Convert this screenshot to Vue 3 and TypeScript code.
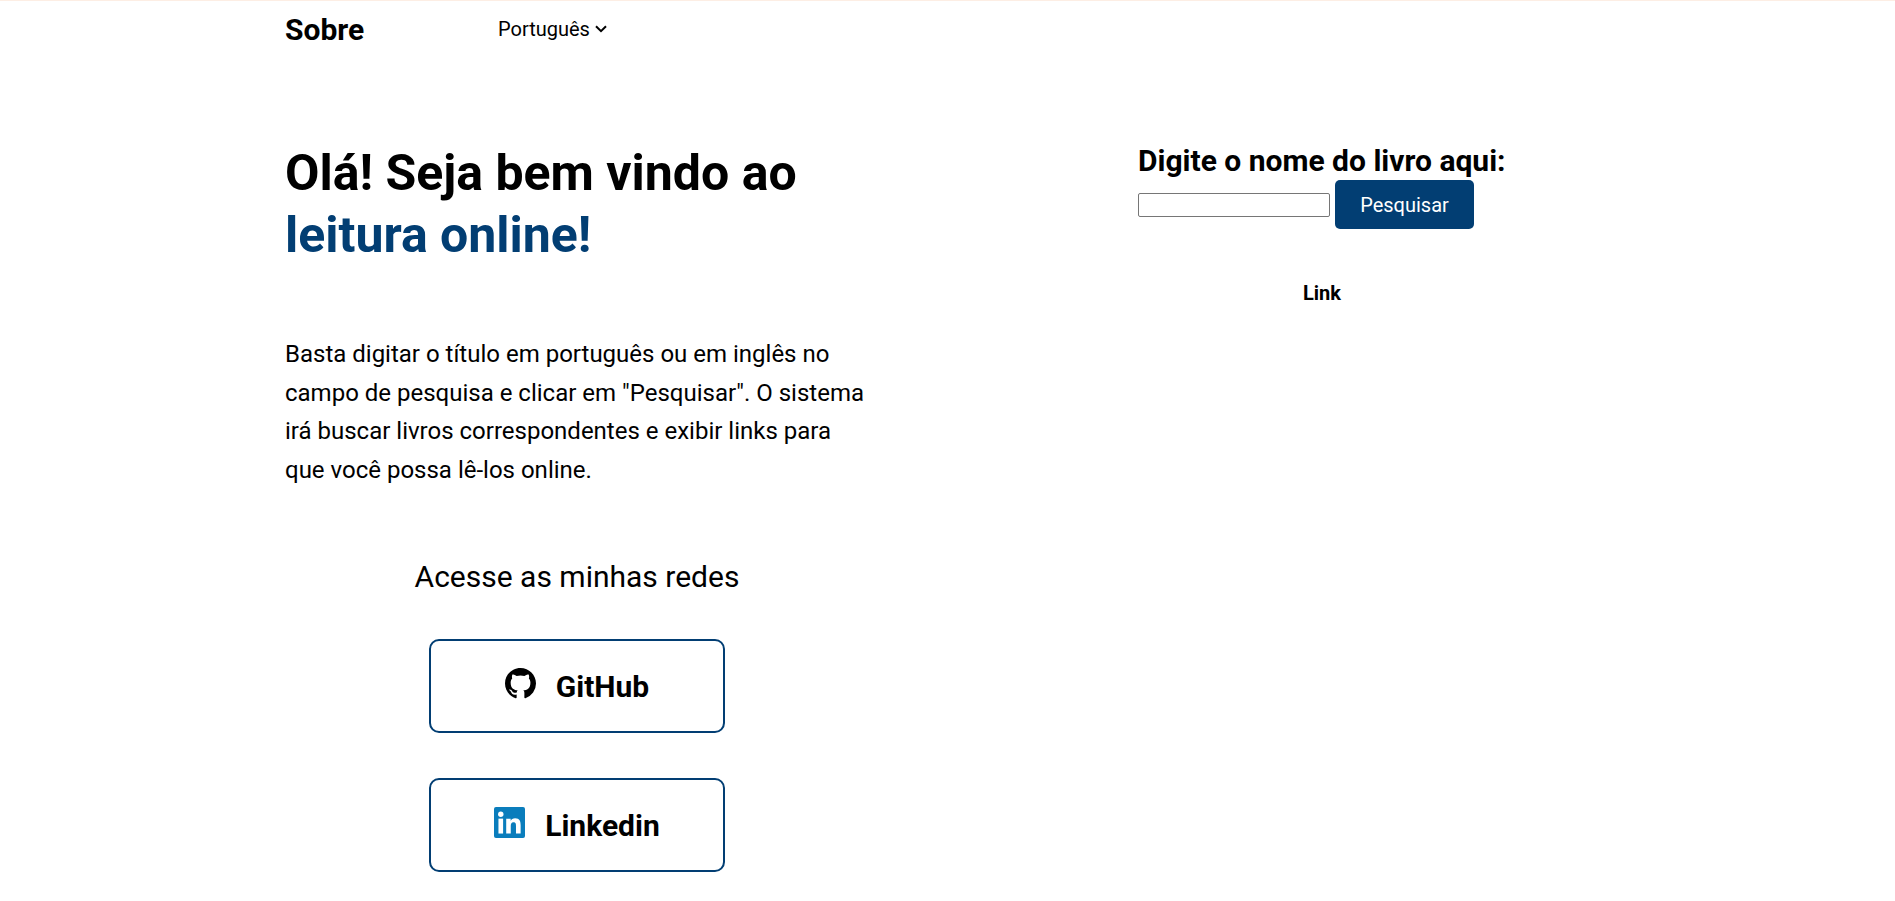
<script setup lang="ts">
const intro = 'Basta digitar o título em português ou em inglês no campo de pesquisa e clicar em "Pesquisar". O sistema irá buscar livros correspondentes e exibir links para que você possa lê-los online.'
</script>

<template>
  <div class="page">
    <header class="nav">
      <a class="about">Sobre</a>
      <div class="lang">
        <span>Português</span>
        <svg class="chev" viewBox="0 0 12 8" width="12" height="8"><path d="M1 1.2 6 6.2l5-5" fill="none" stroke="#000" stroke-width="2"/></svg>
      </div>
    </header>
    <main class="main">
      <section class="left">
        <h1>Olá! Seja bem vindo ao <span class="blue">leitura online!</span></h1>
        <p class="intro">{{ intro }}</p>
        <div class="social">
          <h3>Acesse as minhas redes</h3>
          <a class="card first">
            <svg class="icon" viewBox="0 0 16 16"><path fill="#000" d="M8 0C3.58 0 0 3.58 0 8c0 3.54 2.29 6.53 5.47 7.59.4.07.55-.17.55-.38 0-.19-.01-.82-.01-1.49-2.01.37-2.53-.49-2.69-.94-.09-.23-.48-.94-.82-1.13-.28-.15-.68-.52-.01-.53.63-.01 1.08.58 1.23.82.72 1.21 1.87.87 2.33.66.07-.52.28-.87.51-1.07-1.78-.2-3.64-.89-3.64-3.95 0-.87.31-1.59.82-2.15-.08-.2-.36-1.02.08-2.12 0 0 .67-.21 2.2.82.64-.18 1.32-.27 2-.27s1.36.09 2 .27c1.53-1.04 2.2-.82 2.2-.82.44 1.1.16 1.92.08 2.12.51.56.82 1.27.82 2.15 0 3.07-1.87 3.75-3.65 3.95.29.25.54.73.54 1.48 0 1.07-.01 1.93-.01 2.2 0 .21.15.46.55.38A8.01 8.01 0 0 0 16 8c0-4.42-3.58-8-8-8z"/></svg>
            <span>GitHub</span>
          </a>
          <a class="card">
            <svg class="icon" viewBox="0 0 32 32"><rect width="32" height="32" rx="2" fill="#0a7dbc"/><rect x="4.6" y="12" width="4.8" height="15.4" fill="#fff"/><circle cx="7" cy="7.4" r="2.8" fill="#fff"/><path fill="#fff" d="M12.6 12h4.6v2.1h.1c.6-1.2 2.2-2.5 4.5-2.5 4.8 0 5.7 3.2 5.7 7.3v8.5h-4.8v-7.5c0-1.8 0-4.1-2.5-4.1s-2.9 1.9-2.9 4v7.6h-4.7z"/></svg>
            <span>Linkedin</span>
          </a>
        </div>
      </section>
      <section class="right">
        <h2>Digite o nome do livro aqui:</h2>
        <form class="search" @submit.prevent>
          <input type="text" class="field" />
          <button class="btn" type="submit">Pesquisar</button>
        </form>
        <div class="result">Link</div>
      </section>
    </main>
  </div>
</template>

<style>
html, body { margin: 0; background: #fff; }
</style>

<style scoped>
.page {
  font-family: Roboto, "Liberation Sans", sans-serif;
  color: #000;
  border-top: 1px solid #fdeee4;
  min-height: 900px;
  overflow: hidden;
  padding-left: 285px;
  box-sizing: border-box;
}
.nav {
  display: flex;
  align-items: center;
  height: 56px;
}
.about {
  font-size: 30px;
  font-weight: 700;
  width: 213px;
}
.lang {
  display: flex;
  align-items: center;
  gap: 5px;
  font-size: 20px;
}
.main {
  display: flex;
  padding-top: 85px;
}
.left { width: 584px; flex: none; }
.right { margin-left: 269px; width: 370px; }
h1 {
  margin: 0;
  font-size: 50px;
  line-height: 62px;
  font-weight: 700;
}
.blue { color: #023e73; display: block; }
.intro {
  margin: 69px 0 0;
  font-size: 24px;
  line-height: 38.5px;
}
.social {
  display: flex;
  flex-direction: column;
  align-items: center;
  margin-top: 68px;
}
h3 {
  margin: 0;
  font-size: 30px;
  font-weight: 400;
  line-height: 40px;
}
.card {
  box-sizing: border-box;
  width: 296px;
  height: 94px;
  border: 2px solid #023e73;
  border-radius: 10px;
  display: flex;
  align-items: center;
  justify-content: center;
  gap: 20px;
  font-size: 30px;
  font-weight: 700;
  margin-top: 45px;
}
.card.first { margin-top: 42px; }
.icon { width: 31px; height: 31px; flex: none; position: relative; top: -3px; }
h2 {
  margin: 0;
  font-size: 30px;
  font-weight: 700;
  line-height: 38px;
}
.search {
  display: flex;
  align-items: center;
  gap: 5px;
}
.field {
  box-sizing: border-box;
  width: 192px;
  height: 24px;
  padding: 0;
  border: 1px solid #767676;
  border-radius: 2px;
  background: #fff;
}
.btn {
  width: 139px;
  height: 49px;
  border: 0;
  border-radius: 5px;
  background: #023e73;
  color: #fff;
  font-family: inherit;
  font-size: 20px;
}
.result {
  margin-top: 52px;
  width: 368px;
  text-align: center;
  font-size: 20px;
  font-weight: 700;
  line-height: 24px;
}
</style>
